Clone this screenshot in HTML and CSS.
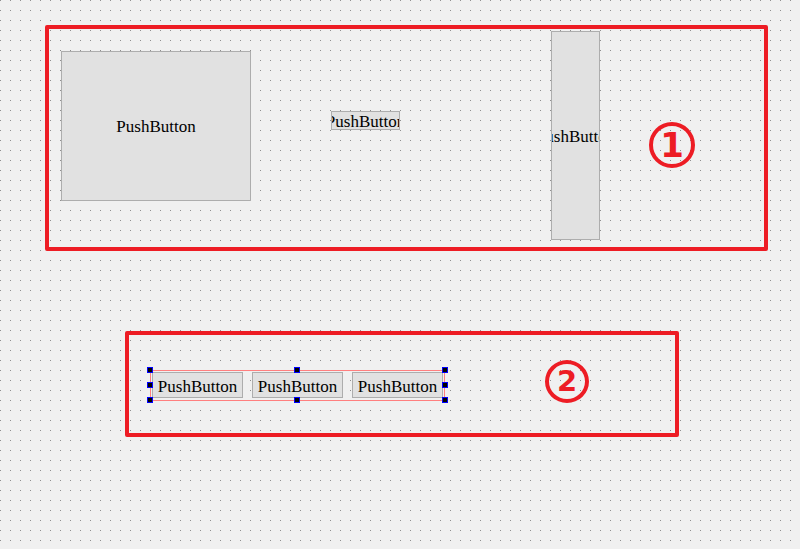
FILE: index.html
```html
<!DOCTYPE html>
<html>
<head>
<meta charset="utf-8">
<link rel="stylesheet" href="styles.css">
</head>
<body>
<div class="canvas">
  <div class="btn btn-big">PushButton</div>
  <div class="btn btn-small">PushButton</div>
  <div class="btn btn-tall">PushButton</div>

  <div class="hlayout">
    <div class="btn-row">PushButton</div>
    <div class="btn-row">PushButton</div>
    <div class="btn-row">PushButton</div>
    <span class="handle h-tl"></span>
    <span class="handle h-tm"></span>
    <span class="handle h-tr"></span>
    <span class="handle h-ml"></span>
    <span class="handle h-mr"></span>
    <span class="handle h-bl"></span>
    <span class="handle h-bm"></span>
    <span class="handle h-br"></span>
  </div>

  <div class="mark mark-1"></div>
  <div class="mark mark-2"></div>
  <div class="badge badge-1">1</div>
  <div class="badge badge-2">2</div>
</div>
</body>
</html>
```
FILE: styles.css
```css
html, body {
  margin: 0;
  padding: 0;
}
body {
  width: 800px;
  height: 549px;
  overflow: hidden;
  background-color: #8e8e8e;
  background-image:
    linear-gradient(90deg, #f0f0f0 9px, transparent 9px),
    linear-gradient(180deg, #f0f0f0 9px, transparent 9px);
  background-size: 10px 10px;
  background-position: 1px 1px;
}
.canvas {
  position: relative;
  width: 800px;
  height: 549px;
}
.btn, .btn-row {
  box-sizing: border-box;
  border: 1px solid #adadad;
  background: #e1e1e1;
  display: flex;
  align-items: center;
  justify-content: center;
  overflow: hidden;
  white-space: nowrap;
  font-family: "Liberation Serif", serif;
  font-size: 17px;
  line-height: 1;
  padding-top: 1px;
  color: #000;
}
.btn {
  position: absolute;
}
.btn-big {
  left: 61px;
  top: 51px;
  width: 190px;
  height: 150px;
}
.btn-small {
  left: 331px;
  top: 111px;
  width: 69px;
  height: 19px;
}
.btn-tall {
  left: 551px;
  top: 31px;
  width: 49px;
  height: 209px;
}
.hlayout {
  position: absolute;
  left: 150px;
  top: 370px;
  width: 295px;
  height: 31px;
  box-sizing: border-box;
  border: 1px solid #ff7f7f;
  padding: 1px;
  display: flex;
  gap: 9px;
}
.btn-row {
  flex: 1;
  height: 26px;
  padding-top: 2px;
}
.handle {
  position: absolute;
  width: 6px;
  height: 6px;
  box-sizing: border-box;
  border: 1px solid #0000ff;
  background: #000;
}
.h-tl { left: -4px; top: -4px; }
.h-tm { left: 143px; top: -4px; }
.h-tr { left: 291px; top: -4px; }
.h-ml { left: -4px; top: 11px; }
.h-mr { left: 291px; top: 11px; }
.h-bl { left: -4px; top: 26px; }
.h-bm { left: 143px; top: 26px; }
.h-br { left: 291px; top: 26px; }
.mark {
  position: absolute;
  box-sizing: border-box;
  border: 4px solid #ed1c24;
  border-radius: 2px;
}
.mark-1 {
  left: 45px;
  top: 25px;
  width: 723px;
  height: 226px;
}
.mark-2 {
  left: 125px;
  top: 331px;
  width: 554px;
  height: 106px;
}
.badge {
  position: absolute;
  box-sizing: border-box;
  border: 4px solid #ed1c24;
  border-radius: 50%;
  display: flex;
  align-items: center;
  justify-content: center;
  font-family: "DejaVu Sans", sans-serif;
  font-weight: bold;
  color: #ed1c24;
  line-height: 1;
}
.badge-1 {
  left: 649px;
  top: 122px;
  width: 46px;
  height: 46px;
  font-size: 34px;
}
.badge-2 {
  left: 545px;
  top: 360px;
  width: 44px;
  height: 43px;
  font-size: 29px;
}
```
